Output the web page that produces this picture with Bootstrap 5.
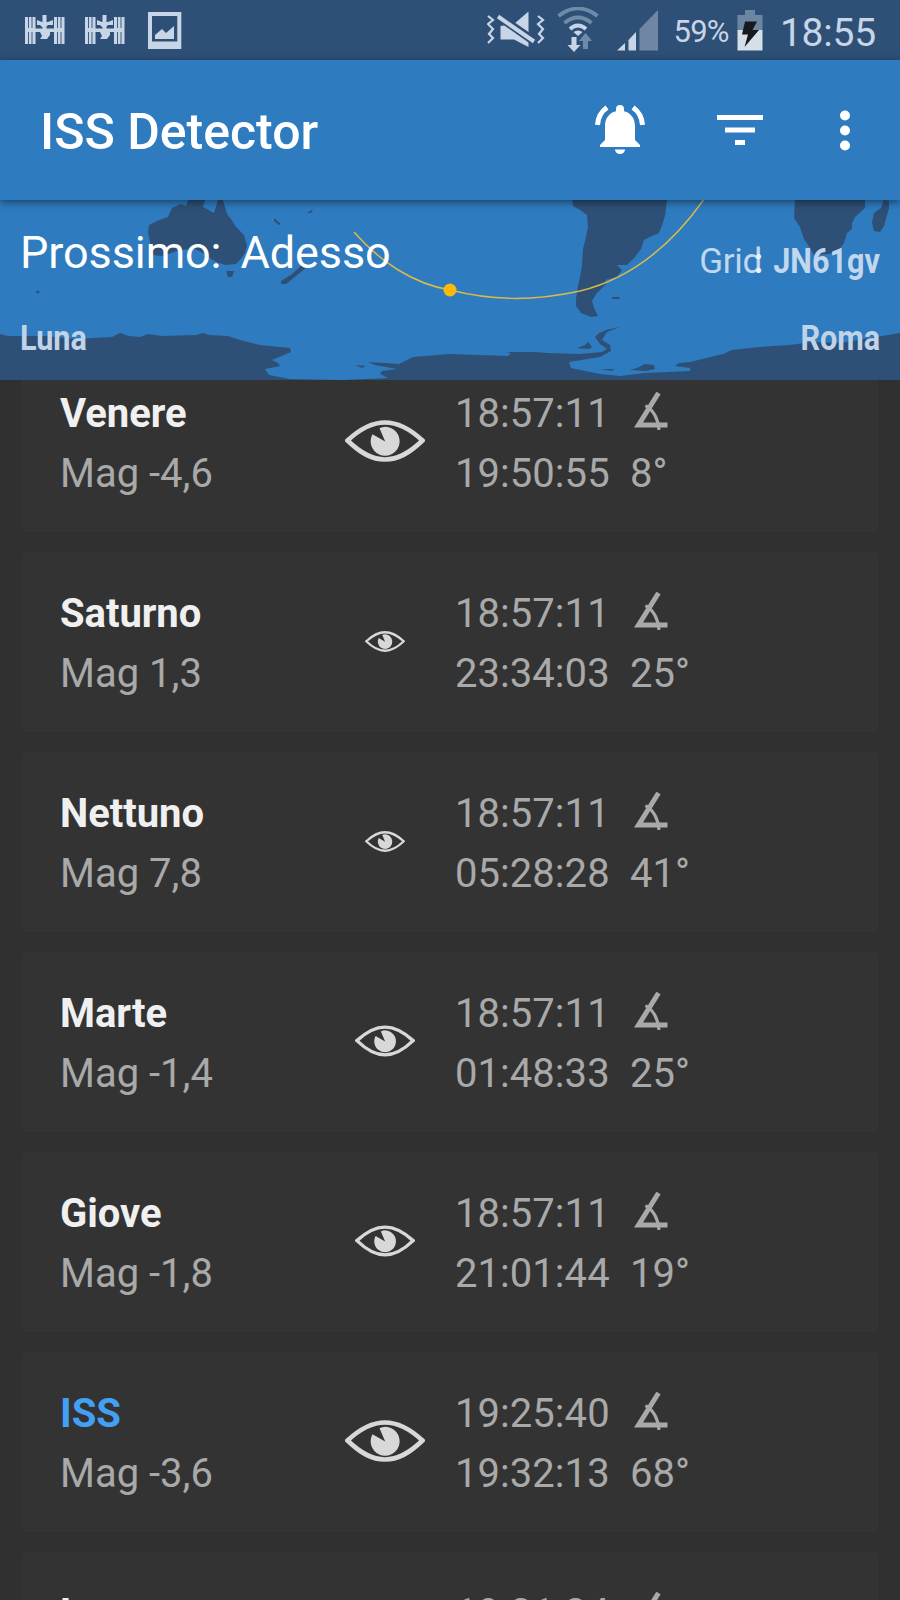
<!DOCTYPE html>
<html lang="it">
<head>
<meta charset="utf-8">
<meta name="viewport" content="width=device-width, initial-scale=1">
<title>ISS Detector</title>
<link href="https://cdn.jsdelivr.net/npm/bootstrap@5.3.0/dist/css/bootstrap.min.css" rel="stylesheet">
<style>
body{background:#303030;font-family:Roboto,"Liberation Sans",sans-serif;height:1600px;overflow:hidden;line-height:1}
svg{display:block;flex:none}
.statusbar{height:60px;background:#2e5077;color:#c8d5e6;padding:0 25px}
.pct{font-size:31px;line-height:60px;letter-spacing:-.7px;padding-top:3px}
.clock{font-size:39px;line-height:60px;letter-spacing:-.2px;padding-top:5px}
.appbar{height:140px;background:#2e7bbf;padding:0 0 0 40px;z-index:2;box-shadow:0 2px 8px rgba(0,0,0,.5)}
.app-title{font-size:50px;font-weight:500;line-height:140px;padding-top:4px;letter-spacing:0}
.map{height:180px;background:#2e7bbf;overflow:hidden;z-index:1}
.map-info{height:180px;padding:0 20px;color:#c0d7ed}
.next{font-size:45px;line-height:60px;padding-top:23px;color:#fff;white-space:pre;letter-spacing:-.1px;word-spacing:-1.5px}
.grid-label{font-size:35px;line-height:40px;padding-top:42px}
.grid-word{letter-spacing:-.3px}
.cond{display:inline-block;font-weight:700;transform:scaleX(.875);transform-origin:right}
.cond.from-left{transform-origin:left}
.places{font-size:35px;line-height:40px;color:#c0d3e7;padding-bottom:21px}
.list{height:1220px;overflow:hidden;padding:0 21px}
.sat{height:180px;margin-bottom:20px;background:#333;border:0;border-radius:3px;padding:32px 0 0 39px;color:#a9a9a9;font-size:40px;line-height:60px;flex:none;box-shadow:0 0 1px rgba(0,0,0,.25)}
.sat:first-child{margin-top:-29px}
.sat:first-child{height:181px}
.sat:first-child{padding-top:33px}
.who{width:250px}
.who b{display:block;font-weight:700;color:#f0f0f0;letter-spacing:-.05px}
.who b.live{color:#42a0f5}
.eye{width:150px;height:114px;color:#d8d8d8}
.times{width:174px;margin-left:-5px;letter-spacing:.05px}
.angle{width:80px;padding-left:1px}
.angle svg{margin:6px 0 14px 4px}
</style>
</head>
<body>
<svg width="0" height="0" class="position-absolute">
  <symbol id="eye" viewBox="0 0 80 42">
    <path d="M2.500 20.500C16 8 28 2.500 40 2.500S64 8 77.500 20.500C64 33.500 53 39.500 40 39.500S16 33.500 2.500 20.500Z" fill="none" stroke="currentColor" stroke-width="4.600"/>
    <path d="M34.500 8.200Q39 5.800 43.500 7.200A14.500 14.500 0 1 1 27.500 14.200L40.200 21.500Z" fill="currentColor"/>
  </symbol>
  <symbol id="angle" viewBox="0 0 34 40">
    <path d="M24.500 3 4.500 35H33.500" fill="none" stroke="currentColor" stroke-width="5"/>
    <path d="M11.500 15.500C19 20 24 28 25 40" fill="none" stroke="currentColor" stroke-width="3.200"/>
  </symbol>
  <symbol id="station" viewBox="0 0 40 30">
    <g fill="currentColor"><path d="M0 2h10.500v27H0zM29 2h10.500v27H29z"/><path d="M9 13.500h22v3.500H9zM17.500 0h4v24h-4zM12 5l5 2h6l5-2v5h-5l-2 2h-4l-2-2h-3zM15 17h10v3l-3 4h-7l2-3z"/></g>
    <path d="M3.500 2v11m0 4v12M7 2v11m0 4v12M32.500 2v11m0 4v12M36 2v11m0 4v12" stroke="#2e5077" stroke-width=".9"/>
  </symbol>
</svg>

<header class="statusbar d-flex align-items-center">
  <svg width="40" height="30"><use href="#station"/></svg>
  <svg width="40" height="30" style="margin-left:20px"><use href="#station"/></svg>
  <svg width="34" height="37" viewBox="0 0 34 37" style="margin-left:23px"><path fill="#c8d5e6" fill-rule="evenodd" d="M0 0h33.300v37H0zM4 4v25.500h25.300V4zM7 27v-4l7-6 4 4 8-7v13z"/></svg>
  <svg class="ms-auto" width="58" height="42" viewBox="0 0 58 42"><g fill="none" stroke="#c8d5e6" stroke-width="2.200"><path d="m1 7 5 4-5 4 5 5-4 5 4 4-5 5M51 7l5 4-5 4 5 5-4 5 4 4-5 5"/></g><path fill="#c8d5e6" d="M41.500 2.500V38L27 30.500H13.500V17L27 15z"/><path d="m9 5.500 40 28" stroke="#2e5077" stroke-width="8.500"/><path d="m11 7.500 36 25" stroke="#c8d5e6" stroke-width="4"/></svg>
  <svg width="42" height="46" viewBox="0 0 42 46" style="margin-left:12px"><g fill="none" stroke-width="3.800"><path stroke="#6f8baa" d="M1.500 9C14-1 28-1 40.500 9M7.500 16q13.500-11 27 0"/><path stroke="#c8d5e6" d="M13 22q8-7 16 0"/></g><path d="m21 29-4.500-4q4.500-3 9 0z" fill="#c8d5e6"/><path fill="#c8d5e6" d="M14.500 30h5v8h4L17 45l-6.500-7h4z"/><path fill="#6f8baa" d="M26 42h5v-8h4l-6.500-8-6.500 8h4z"/></svg>
  <svg width="42" height="42" viewBox="0 0 42 42" style="margin-left:18px"><path fill="#c8d5e6" d="M0 41.500 8 34v7.500zM11.500 41.500V31L19 23v18.500z"/><path fill="#6f87a4" d="M22.500 41.500V20L41 1v40.500z"/></svg>
  <span class="pct" style="margin-left:14px">59%</span>
  <svg width="26" height="41" viewBox="0 0 26 41" style="margin-left:8px"><path fill="#6b85a3" d="M8 0h10v5h7.500v15H.5V5H8z"/><path fill="#d5dfea" d="M.5 20h25v20.500H.5z"/><path fill="#17191c" d="M8 11.500h12L15.500 20H22L7.500 37l3.500-12.500H5z"/></svg>
  <span class="clock" style="margin-left:17px;margin-right:-1px">18:55</span>
</header>

<nav class="navbar appbar position-relative d-flex flex-nowrap">
  <span class="app-title text-white me-auto">ISS Detector</span>
  <svg width="50" height="50" viewBox="0 0 50 50" fill="#fff" style="margin-right:72px"><path d="M25 0a4 4 0 0 1 4 4v2.200C36.500 8 40 14 40 21v14l5 5v2H5v-2l5-5V21C10 14 13.500 8 21 6.200V4a4 4 0 0 1 4-4zM20 44.500h10a5 4.500 0 0 1-10 0z"/><path d="M2.500 20C3 12 7 6 12 2.500M47.500 20C47 12 43 6 38 2.500" fill="none" stroke="#fff" stroke-width="5"/></svg>
  <svg width="46" height="30" viewBox="0 0 46 30" fill="#fff" style="margin-right:77px"><path d="M0 0h46v5H0zM8 12.500h30v5H8zM18 25h10v5H18z"/></svg>
  <svg width="10" height="41" viewBox="0 0 10 41" fill="#fff" style="margin-right:50px"><circle cx="5" cy="5.500" r="5"/><circle cx="5" cy="20.500" r="5"/><circle cx="5" cy="35.500" r="5"/></svg>
</nav>

<section class="map position-relative">
  <svg class="position-absolute top-0 start-0" width="900" height="180" viewBox="0 0 900 180">
    <g fill="#2e5077">
      <path d="M188 0H205L203 7 214 13 218 0H223L227 14 231 19 236 27 244 35 247 46 245 53 240 60 236 64 226 65 219 63 211 59 203 53 195 49 180 50 171 53 163 56 153 55 151 48 150 42 148 32 149 25 157 21 168 17 172 8 181 4 186 6Z"/>
      <path d="M226 71H234L232 77 228 77ZM281 81 292 74 302 65 306 68 296 76 286 84 281 84ZM274 18 281 24 279 25 274 21ZM307 13 313 9 311 13ZM35 91h5l-2 3z"/>
      <path d="M572 0H667L665 16 662 25 659 33 652 36 644 40 641 49 635 57 627 65 617 65 622 70 617 77 605 80 607 83 601 89 596 94 592 101 594 108 598 116 591 117 581 113 576 106 576 99 578 86 580 77 582 65 583 49 586 37 588 27 587 15 580 10 573 6Z"/>
      <path d="M611 97h8l1 2h-7zM795 0H865L865 8 855 17 852 23 852 29 847 33 844 43 838 51 829 54 814 55 810 48 804 39 800 27 794 18ZM884 0 889 1 889 8 884 26 880 32 874 31 872 22 874 13 881 8Z"/>
      <path d="M0 134 8 136 45 136 75 139 112 137 120 133 129 136 140 137 148 134 162 136 196 135 203 133 209 135 228 136 240 140 260 145 290 148 291 152 272 160 278 163 280 166 265 169 269 175 290 179 340 180H0ZM344 180 388 178 380 174 382 171 397 169 375 165 368 162 399 164 413 157 450 154 508 156 511 153 505 152 534 152 548 153 580 154 602 152 607 149 600 144 595 137 599 133 608 130 605 135 602 140 610 145 611 151 600 157 569 162 571 168 600 174 620 176 645 173 690 171 690 168 675 166 679 163 690 162 723 154 732 150 760 147 790 145 812 142 840 143 870 138 900 133V180Z"/>
      <path d="M577 148 585 145 588 142 592 147 589 149ZM599 134 606 130 620 127 607 132ZM630 170l7-2 8-4 9 1 1 4-9 2zM600 169h14l-2 2zM355 165l11 1-4 2z"/>
    </g>
    <path d="M354 32C380 62 414 84 450 90C490 100 530 102 580 91C625 80 668 50 703.500 0" fill="none" stroke="#d8bb48" stroke-width="1.500"/>
    <circle cx="450" cy="90" r="6.500" fill="#fdb90e"/>
  </svg>
  <div class="map-info position-relative d-flex flex-column justify-content-between">
    <div class="d-flex justify-content-between">
      <div class="next">Prossimo:  Adesso</div>
      <div class="grid-label d-flex"><span class="grid-word">Grid</span><span class="cond" style="color:#e9f3fc;margin-left:-9px">:</span><span class="cond" style="margin-left:-5px">JN61gv</span></div>
    </div>
    <div class="places d-flex justify-content-between"><span class="cond from-left">Luna</span><span class="cond">Roma</span></div>
  </div>
</section>

<main class="list d-flex flex-column">
  <article class="card sat flex-row"><div class="who"><b>Venere</b>Mag -4,6</div><div class="eye d-flex align-items-center justify-content-center"><svg width="80" height="42"><use href="#eye"/></svg></div><div class="times">18:57:11<br>19:50:55</div><div class="angle"><svg width="34" height="40"><use href="#angle"/></svg>8°</div></article>
  <article class="card sat flex-row"><div class="who"><b>Saturno</b>Mag 1,3</div><div class="eye d-flex align-items-center justify-content-center"><svg width="40" height="21"><use href="#eye"/></svg></div><div class="times">18:57:11<br>23:34:03</div><div class="angle"><svg width="34" height="40"><use href="#angle"/></svg>25°</div></article>
  <article class="card sat flex-row"><div class="who"><b>Nettuno</b>Mag 7,8</div><div class="eye d-flex align-items-center justify-content-center"><svg width="40" height="21"><use href="#eye"/></svg></div><div class="times">18:57:11<br>05:28:28</div><div class="angle"><svg width="34" height="40"><use href="#angle"/></svg>41°</div></article>
  <article class="card sat flex-row"><div class="who"><b>Marte</b>Mag -1,4</div><div class="eye d-flex align-items-center justify-content-center"><svg width="60" height="32"><use href="#eye"/></svg></div><div class="times">18:57:11<br>01:48:33</div><div class="angle"><svg width="34" height="40"><use href="#angle"/></svg>25°</div></article>
  <article class="card sat flex-row"><div class="who"><b>Giove</b>Mag -1,8</div><div class="eye d-flex align-items-center justify-content-center"><svg width="60" height="32"><use href="#eye"/></svg></div><div class="times">18:57:11<br>21:01:44</div><div class="angle"><svg width="34" height="40"><use href="#angle"/></svg>19°</div></article>
  <article class="card sat flex-row"><div class="who"><b class="live">ISS</b>Mag -3,6</div><div class="eye d-flex align-items-center justify-content-center"><svg width="80" height="42"><use href="#eye"/></svg></div><div class="times">19:25:40<br>19:32:13</div><div class="angle"><svg width="34" height="40"><use href="#angle"/></svg>68°</div></article>
  <article class="card sat flex-row"><div class="who"><b>Luna</b></div><div class="eye"></div><div class="times">19:21:34</div><div class="angle"><svg width="34" height="40"><use href="#angle"/></svg></div></article>
</main>
<script src="https://cdn.jsdelivr.net/npm/bootstrap@5.3.0/dist/js/bootstrap.bundle.min.js"></script>
</body>
</html>
